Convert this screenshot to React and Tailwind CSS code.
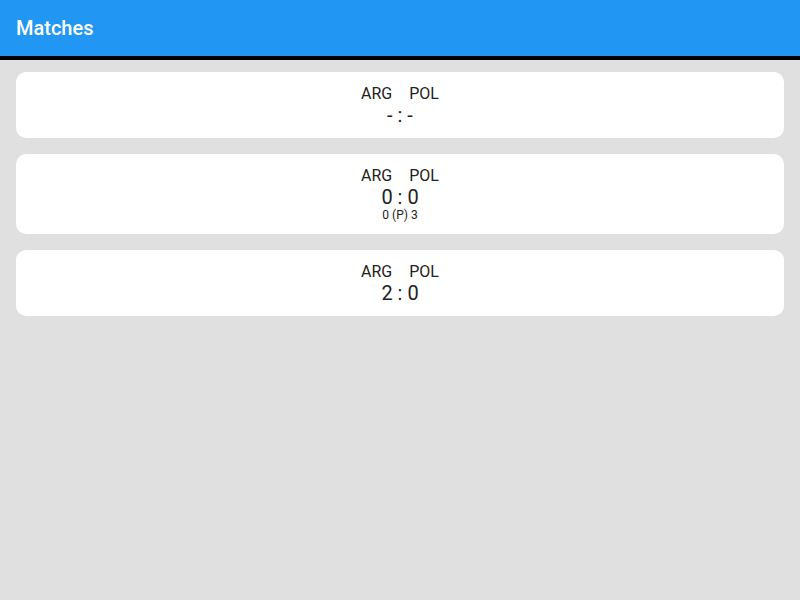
import React from 'react';

const matches = [
  { home: 'ARG', away: 'POL', score: '- : -' },
  { home: 'ARG', away: 'POL', score: '0 : 0', penalties: '0 (P) 3' },
  { home: 'ARG', away: 'POL', score: '2 : 0' },
];

function MatchCard({ match }) {
  return (
    <div className="bg-white rounded-[10px] py-3 flex flex-col items-center text-[#212121]">
      <div className="flex gap-[17px] text-[16px] leading-5">
        <span>{match.home}</span>
        <span>{match.away}</span>
      </div>
      <div className="text-[20px] leading-[22px]">{match.score}</div>
      {match.penalties && <div className="text-[12px] leading-[14px]">{match.penalties}</div>}
    </div>
  );
}

export default function App() {
  return (
    <div className="min-h-screen bg-[#e0e0e0] font-['Roboto',sans-serif]">
      <header className="h-[60px] bg-[#2196f3] border-b-4 border-black flex items-center px-4">
        <h1 className="text-white text-[20px] font-medium">Matches</h1>
      </header>
      <div className="px-4 pt-3 flex flex-col gap-4">
        {matches.map((m, i) => (
          <MatchCard key={i} match={m} />
        ))}
      </div>
    </div>
  );
}
